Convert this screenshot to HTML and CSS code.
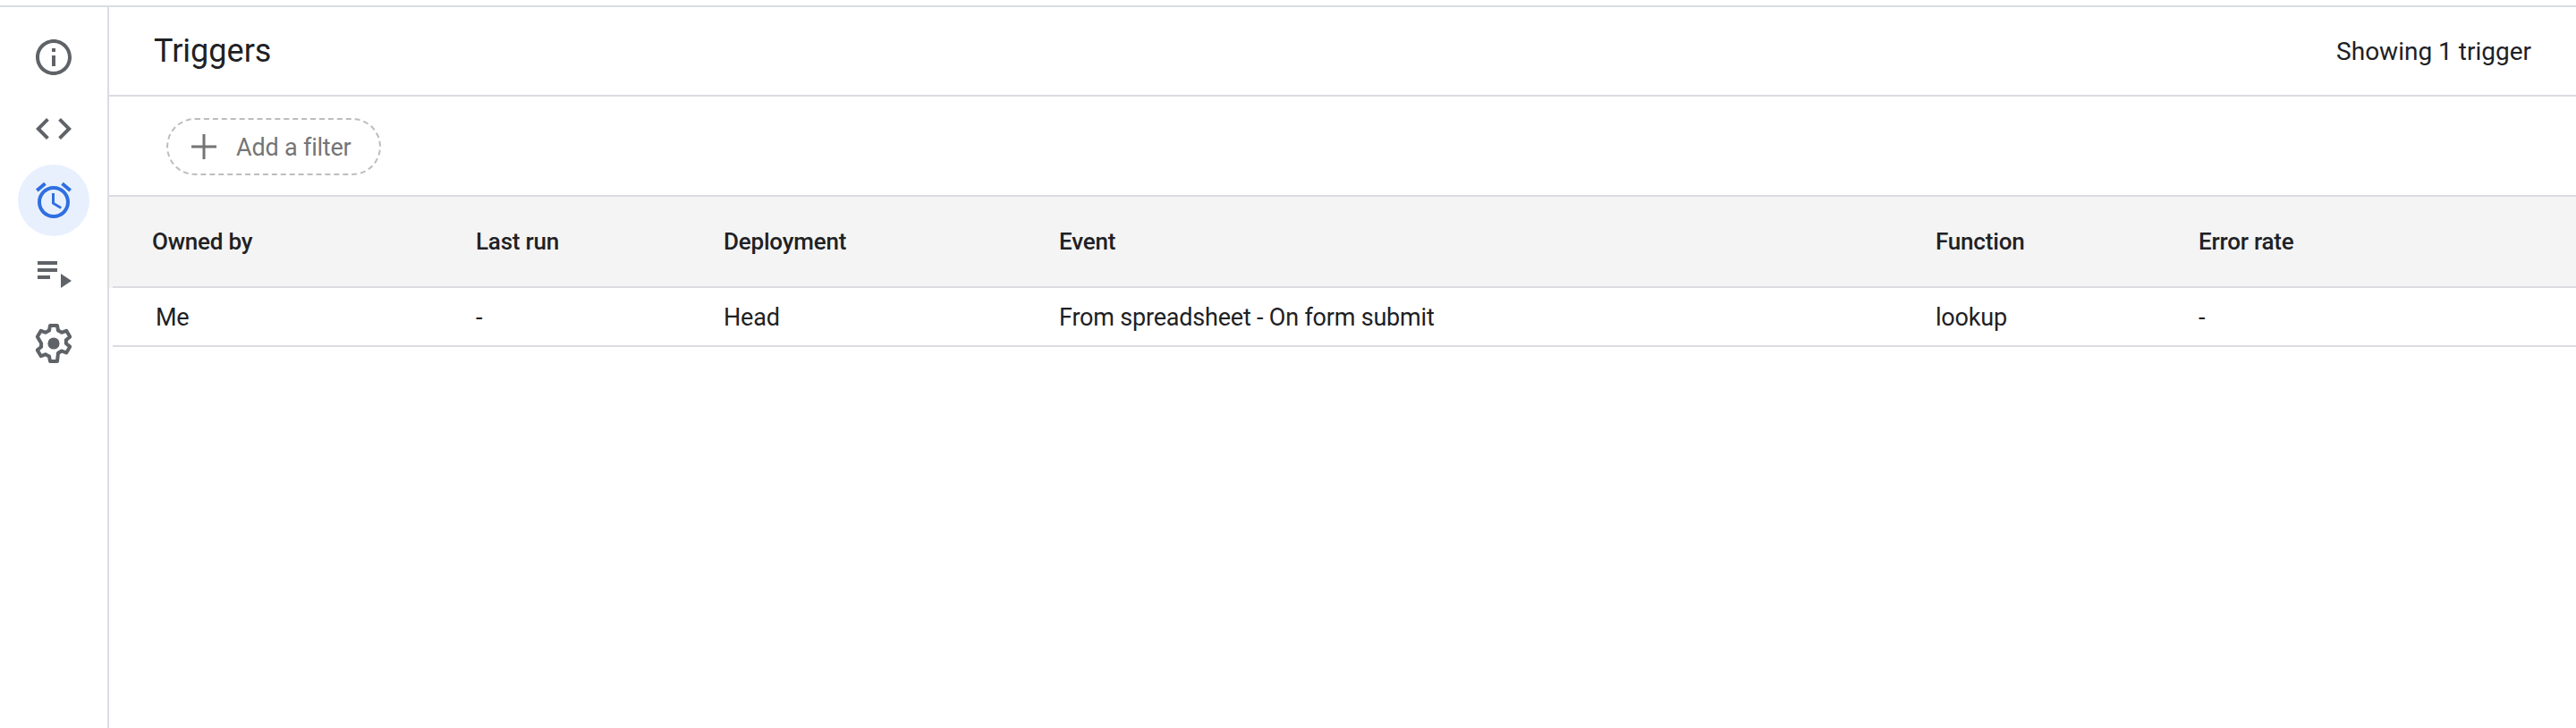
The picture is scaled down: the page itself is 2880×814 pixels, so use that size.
FILE: index.html
```html
<!DOCTYPE html>
<html lang="en">
<head>
<meta charset="UTF-8">
<title>Triggers</title>
<link rel="stylesheet" href="styles.css">
</head>
<body>

<div class="app">
    <nav class="sidebar">
        <a class="nav-item">
            <svg viewBox="0 0 24 24" width="48" height="48"><path fill="#5f6368" d="M11 7h2v2h-2zm0 4h2v6h-2zm1-9C6.48 2 2 6.48 2 12s4.48 10 10 10 10-4.48 10-10S17.52 2 12 2zm0 18c-4.41 0-8-3.59-8-8s3.59-8 8-8 8 3.59 8 8-3.59 8-8 8z"/></svg>
        </a>
        <a class="nav-item">
            <svg viewBox="0 0 24 24" width="48" height="48"><path fill="#5f6368" d="M9.4 16.6 4.8 12l4.6-4.6L8 6l-6 6 6 6 1.4-1.4zm5.2 0 4.6-4.6-4.6-4.6L16 6l6 6-6 6-1.4-1.4z"/></svg>
        </a>
        <a class="nav-item active">
            <svg viewBox="0 0 24 24" width="48" height="48"><path fill="#2f6fe0" d="M22 5.72l-4.6-3.86-1.29 1.53 4.6 3.86L22 5.72zM7.88 3.39 6.6 1.86 2 5.71l1.29 1.53 4.59-3.85zM12.5 8H11v6l4.75 2.85.75-1.23-4-2.37V8zM12 4c-4.97 0-9 4.03-9 9s4.03 9 9 9 9-4.03 9-9-4.03-9-9-9zm0 16c-3.87 0-7-3.13-7-7s3.13-7 7-7 7 3.13 7 7-3.13 7-7 7z"/></svg>
        </a>
        <a class="nav-item">
            <svg viewBox="0 0 24 24" width="48" height="48"><path fill="#5f6368" d="M3 6h11v2H3zm0 4h11v2H3zm0 4h7v2H3zm13-1v8l6-4z"/></svg>
        </a>
        <a class="nav-item">
            <svg viewBox="0 0 24 24" width="48" height="48"><path fill="none" stroke="#5f6368" stroke-width="2" stroke-linejoin="round" d="M10 2h4l.5 2.800c.7.250 1.300.600 1.900 1.100l2.700-1 2 3.400-2.200 1.800c.1.700.1 1.300 0 1.900l2.200 1.800-2 3.400-2.700-1c-.6.500-1.200.85-1.900 1.100L14 22h-4l-.5-2.800c-.7-.25-1.300-.6-1.900-1.100l-2.700 1-2-3.400 2.200-1.800c-.1-.7-.1-1.300 0-1.900L2.900 8.300l2-3.400 2.700 1c.6-.5 1.200-.85 1.900-1.100z"/><circle cx="12" cy="12" r="3.300" fill="#5f6368"/></svg>
        </a>
    </nav>

    <main class="content">
        <header class="page-header">
            <h1>Triggers</h1>
            <span class="count">Showing 1 trigger</span>
        </header>

        <div class="filter-bar">
            <button class="add-filter">
                <svg viewBox="0 0 28 28" width="28" height="28"><path fill="#757575" d="M12.500 0h3v12.500H28v3H15.500V28h-3V15.500H0v-3h12.500z"/></svg>
                <span class="add-filter-label">Add a filter</span>
            </button>
        </div>

        <div class="table-wrap">
            <table class="triggers">
                <thead>
                    <tr>
                        <th class="col-owner">Owned by</th>
                        <th class="col-run">Last run</th>
                        <th class="col-deploy">Deployment</th>
                        <th class="col-event">Event</th>
                        <th class="col-func">Function</th>
                        <th>Error rate</th>
                    </tr>
                </thead>
                <tbody>
                    <tr>
                        <td class="owner">Me</td>
                        <td>-</td>
                        <td>Head</td>
                        <td>From spreadsheet - On form submit</td>
                        <td>lookup</td>
                        <td>-</td>
                    </tr>
                </tbody>
            </table>
        </div>
    </main>
</div>

</body>
</html>
```

FILE: styles.css
```css
* {
    box-sizing: border-box;
}

html, body {
    height: 100%;
}

body {
    margin: 0;
    padding-top: 6px;
    font-family: "Roboto", "Open Sans", sans-serif;
    color: #202124;
    background-color: #fff;
    overflow: hidden;
}

.app {
    display: flex;
    height: 808px;
    border-top: 2px solid #dadce0;
}

.sidebar {
    width: 122px;
    flex: none;
    border-right: 2px solid #dadce0;
    display: flex;
    flex-direction: column;
    align-items: center;
    padding-top: 16px;
}

.nav-item {
    width: 80px;
    height: 80px;
    display: flex;
    align-items: center;
    justify-content: center;
    border-radius: 50%;
}

.active {
    background-color: #e8f0fe;
}

.content {
    flex: 1;
    min-width: 0;
}

.page-header {
    height: 100px;
    padding: 0 50px;
    display: flex;
    align-items: center;
    justify-content: space-between;
    border-bottom: 2px solid #dadce0;
}

h1 {
    margin: 0;
    font-size: 36px;
    font-weight: 400;
}

.count {
    font-size: 28px;
}

.filter-bar {
    height: 110px;
    padding: 24px 0 0 64px;
}

.add-filter {
    width: 240px;
    height: 64px;
    padding: 0 0 0 26px;
    display: flex;
    align-items: center;
    gap: 22px;
    font-family: inherit;
    font-size: 27px;
    letter-spacing: -0.2px;
    color: #757575;
    background: none;
    border: 2px dashed #bdbdbd;
    border-radius: 32px;
}

.add-filter-label {
    padding-top: 2px;
}

.table-wrap {
    border-top: 2px solid #dadce0;
    padding-left: 4px;
}

.triggers {
    width: 100%;
    border-collapse: separate;
    border-spacing: 0;
    table-layout: fixed;
}

th {
    height: 102px;
    padding: 0 0 0 44px;
    font-size: 26px;
    font-weight: 500;
    letter-spacing: -0.2px;
    text-align: left;
    background-color: #f4f4f4;
    border-bottom: 2px solid #dadce0;
}

th:first-child {
    box-shadow: -4px 0 0 #f4f4f4;
}

td {
    height: 66px;
    padding: 2px 0 0 44px;
    font-size: 27px;
    letter-spacing: -0.2px;
    border-bottom: 2px solid #dadce0;
}

.col-owner { width: 362px; }
.col-run { width: 277px; }
.col-deploy { width: 375px; }
.col-event { width: 980px; }
.col-func { width: 294px; }

.owner {
    padding-left: 48px;
}
```
